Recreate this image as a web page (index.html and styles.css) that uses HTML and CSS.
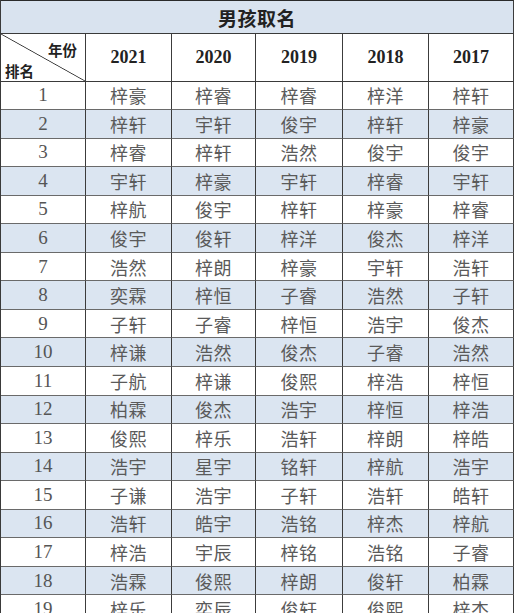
FILE: index.html
```html
<!DOCTYPE html>
<html lang="zh">
<head>
<meta charset="utf-8">
<title>男孩取名</title>
<link rel="stylesheet" href="styles.css">
</head>
<body>
<div class="sheet">
  <div class="title">男孩取名</div>
  <div class="corner"><span class="c-year">年份</span><span class="c-rank">排名</span></div>
  <div class="head">2021</div><div class="head">2020</div><div class="head">2019</div><div class="head">2018</div><div class="head">2017</div>

  <div class="num">1</div><div class="nm">梓豪</div><div class="nm">梓睿</div><div class="nm">梓睿</div><div class="nm">梓洋</div><div class="nm">梓轩</div>
  <div class="num alt">2</div><div class="nm alt">梓轩</div><div class="nm alt">宇轩</div><div class="nm alt">俊宇</div><div class="nm alt">梓轩</div><div class="nm alt">梓豪</div>
  <div class="num">3</div><div class="nm">梓睿</div><div class="nm">梓轩</div><div class="nm">浩然</div><div class="nm">俊宇</div><div class="nm">俊宇</div>
  <div class="num alt">4</div><div class="nm alt">宇轩</div><div class="nm alt">梓豪</div><div class="nm alt">宇轩</div><div class="nm alt">梓睿</div><div class="nm alt">宇轩</div>
  <div class="num">5</div><div class="nm">梓航</div><div class="nm">俊宇</div><div class="nm">梓轩</div><div class="nm">梓豪</div><div class="nm">梓睿</div>
  <div class="num alt">6</div><div class="nm alt">俊宇</div><div class="nm alt">俊轩</div><div class="nm alt">梓洋</div><div class="nm alt">俊杰</div><div class="nm alt">梓洋</div>
  <div class="num">7</div><div class="nm">浩然</div><div class="nm">梓朗</div><div class="nm">梓豪</div><div class="nm">宇轩</div><div class="nm">浩轩</div>
  <div class="num alt">8</div><div class="nm alt">奕霖</div><div class="nm alt">梓恒</div><div class="nm alt">子睿</div><div class="nm alt">浩然</div><div class="nm alt">子轩</div>
  <div class="num">9</div><div class="nm">子轩</div><div class="nm">子睿</div><div class="nm">梓恒</div><div class="nm">浩宇</div><div class="nm">俊杰</div>
  <div class="num alt">10</div><div class="nm alt">梓谦</div><div class="nm alt">浩然</div><div class="nm alt">俊杰</div><div class="nm alt">子睿</div><div class="nm alt">浩然</div>
  <div class="num">11</div><div class="nm">子航</div><div class="nm">梓谦</div><div class="nm">俊熙</div><div class="nm">梓浩</div><div class="nm">梓恒</div>
  <div class="num alt">12</div><div class="nm alt">柏霖</div><div class="nm alt">俊杰</div><div class="nm alt">浩宇</div><div class="nm alt">梓恒</div><div class="nm alt">梓浩</div>
  <div class="num">13</div><div class="nm">俊熙</div><div class="nm">梓乐</div><div class="nm">浩轩</div><div class="nm">梓朗</div><div class="nm">梓皓</div>
  <div class="num alt">14</div><div class="nm alt">浩宇</div><div class="nm alt">星宇</div><div class="nm alt">铭轩</div><div class="nm alt">梓航</div><div class="nm alt">浩宇</div>
  <div class="num">15</div><div class="nm">子谦</div><div class="nm">浩宇</div><div class="nm">子轩</div><div class="nm">浩轩</div><div class="nm">皓轩</div>
  <div class="num alt">16</div><div class="nm alt">浩轩</div><div class="nm alt">皓宇</div><div class="nm alt">浩铭</div><div class="nm alt">梓杰</div><div class="nm alt">梓航</div>
  <div class="num">17</div><div class="nm">梓浩</div><div class="nm">宇辰</div><div class="nm">梓铭</div><div class="nm">浩铭</div><div class="nm">子睿</div>
  <div class="num alt">18</div><div class="nm alt">浩霖</div><div class="nm alt">俊熙</div><div class="nm alt">梓朗</div><div class="nm alt">俊轩</div><div class="nm alt">柏霖</div>
  <div class="num">19</div><div class="nm">梓乐</div><div class="nm">奕辰</div><div class="nm">俊轩</div><div class="nm">俊熙</div><div class="nm">梓杰</div>
</div>
</body>
</html>
```

FILE: styles.css
```css
html, body {
  margin: 0;
  padding: 0;
  background: #ffffff;
  overflow: hidden;
}

.sheet {
  width: 514px;
  box-sizing: border-box;
  border-left: 1px solid #3a3a3a;
  display: grid;
  grid-template-columns: 85px 86px 84px 87px 86px 85px;
  grid-template-rows: 34px 47.5px;
  grid-auto-rows: 28.55px;
}

.sheet > div {
  box-sizing: border-box;
  border-right: 1px solid #3c3c3c;
  border-bottom: 1px solid #6a6a6a;
  display: flex;
  align-items: center;
  justify-content: center;
}

.title {
  grid-column: 1 / -1;
  background: #d9e3ef;
  border-top: 1px solid #2a2a2a;
  border-bottom-color: #3a3a3a !important;
  font-family: "Noto Sans CJK SC", sans-serif;
  font-weight: 700;
  font-size: 19px;
  color: #222;
  letter-spacing: 0.5px;
  padding-top: 1px;
}

.corner {
  flex-direction: column;
  align-items: stretch !important;
  justify-content: space-between !important;
  padding: 7px 8px 2px 4px;
  font-family: "Noto Sans CJK SC", sans-serif;
  font-weight: 700;
  font-size: 14.5px;
  line-height: 17px;
  color: #222;
  border-bottom-color: #3a3a3a !important;
  background: linear-gradient(to top right, transparent calc(50% - 0.8px), #333 50%, transparent calc(50% + 0.8px));
}

.c-year {
  align-self: flex-end;
}

.c-rank {
  align-self: flex-start;
}

.head {
  font-family: "Liberation Serif", serif;
  font-weight: 700;
  font-size: 18px;
  color: #222;
  border-bottom-color: #3a3a3a !important;
}

.num {
  font-family: "Liberation Serif", serif;
  font-size: 19px;
  color: #555;
}

.nm {
  font-family: "Noto Sans CJK SC", sans-serif;
  font-size: 18px;
  color: #5a5a5a;
  letter-spacing: 0.5px;
}

.alt {
  background: #dbe5f1;
}
```
